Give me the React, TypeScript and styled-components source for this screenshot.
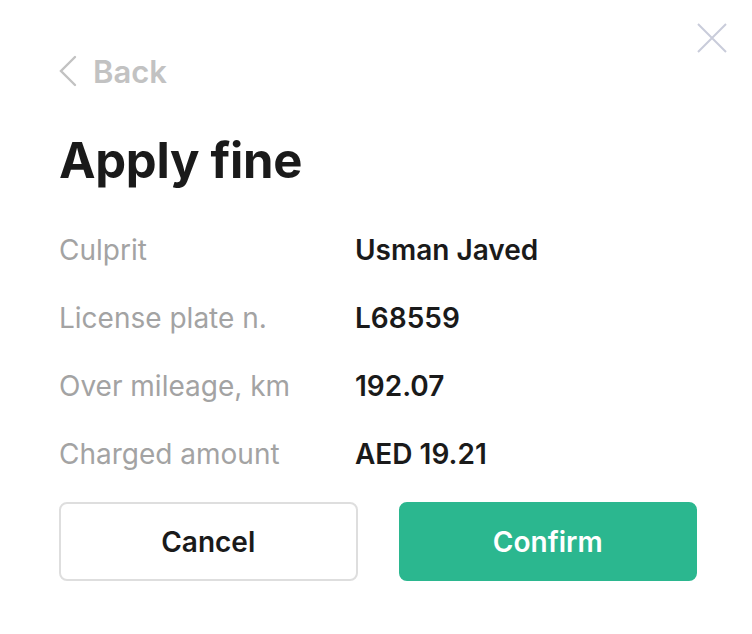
import styled, { createGlobalStyle } from "styled-components"

const Global = createGlobalStyle`
    body {
        margin: 0;
        background: #ffffff;
        font-family: Inter, "Noto Sans", sans-serif;
    }
`

const Modal = styled.div`
    position: relative;
    width: 752px;
    height: 634px;
    box-sizing: border-box;
    padding: 52px 55px 0 59px;
    background: #fff;
`

const Close = styled.button`
    position: absolute;
    top: 22px;
    right: 24px;
    width: 32px;
    height: 32px;
    padding: 0;
    border: none;
    background: none;
    cursor: pointer;
`

const BackLink = styled.a`
    display: flex;
    align-items: center;
    gap: 16px;
    color: #c2c2c2;
    font-size: 31px;
    font-weight: 600;
    text-decoration: none;
    height: 38px;
`

const Title = styled.h1`
    margin: 43px 0 0;
    font-size: 49px;
    font-weight: 700;
    color: #1a1a1a;
    letter-spacing: -0.3px;
    line-height: 56px;
`

const Details = styled.div`
    display: grid;
    grid-template-columns: 296px 1fr;
    grid-auto-rows: 68px;
    margin-top: 27px;
    align-items: center;
`

const Label = styled.span`
    font-size: 28px;
    color: #a3a3a3;
`

const Value = styled.span`
    font-size: 28px;
    font-weight: 600;
    color: #1a1a1a;
`

const Actions = styled.div`
    display: grid;
    grid-template-columns: 1fr 1fr;
    gap: 41px;
    margin-top: 14px;
`

const Button = styled.button<{ $primary?: boolean }>`
    height: 79px;
    border-radius: 8px;
    font-family: inherit;
    font-size: 28px;
    font-weight: 600;
    cursor: pointer;
    border: 2px solid ${p => (p.$primary ? "#2bb78f" : "#dedede")};
    background: ${p => (p.$primary ? "#2bb78f" : "#fff")};
    color: ${p => (p.$primary ? "#fff" : "#1a1a1a")};
`

const rows = [
    ["Culprit", "Usman Javed"],
    ["License plate n.", "L68559"],
    ["Over mileage, km", "192.07"],
    ["Charged amount", "AED 19.21"],
]

export default function App() {
    return (
        <>
            <Global />
            <Modal>
                <Close aria-label="Close">
                    <svg width="32" height="32" viewBox="0 0 32 32" fill="none" stroke="#c9ccda" strokeWidth="2">
                        <path d="M2 2 L30 30 M30 2 L2 30" />
                    </svg>
                </Close>
                <BackLink href="#">
                    <svg width="18" height="32" viewBox="0 0 18 32" fill="none" stroke="#c2c2c2" strokeWidth="2.4" strokeLinecap="round">
                        <path d="M16 2 L2 16 L16 30" />
                    </svg>
                    Back
                </BackLink>
                <Title>Apply fine</Title>
                <Details>
                    {rows.map(([k, v]) => (
                        <>
                            <Label key={k}>{k}</Label>
                            <Value key={k + "v"}>{v}</Value>
                        </>
                    ))}
                </Details>
                <Actions>
                    <Button>Cancel</Button>
                    <Button $primary>Confirm</Button>
                </Actions>
            </Modal>
        </>
    )
}
